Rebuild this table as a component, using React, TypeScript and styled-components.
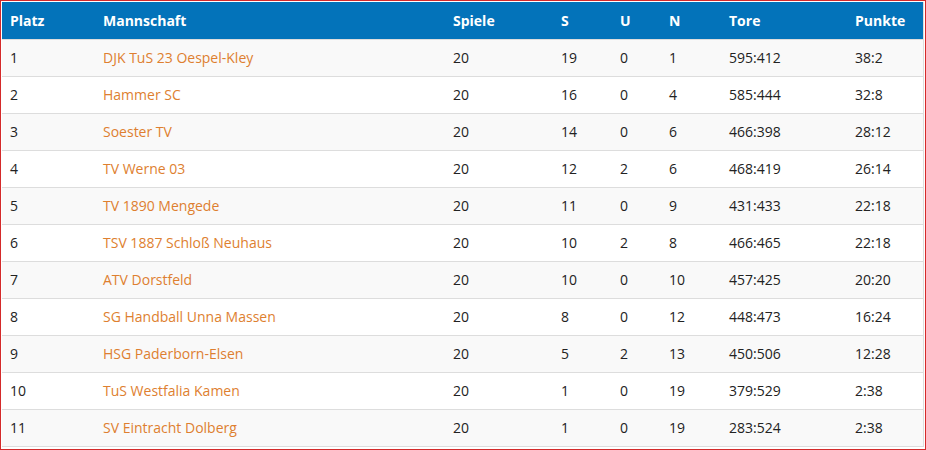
import React from 'react';
import styled, { createGlobalStyle } from 'styled-components';

const GlobalStyle = createGlobalStyle`
  html, body {
    margin: 0;
    padding: 0;
    background: #ffffff;
  }
  * {
    box-sizing: border-box;
  }
`;

const Frame = styled.div`
  width: 926px;
  height: 450px;
  border: 1px solid #d42a2a;
  padding: 1px 1px 0 1px;
  background: #ffffff;
  font-family: 'Open Sans', 'Liberation Sans', sans-serif;
  font-size: 14px;
  color: #222222;
  overflow: hidden;
`;

const Table = styled.table`
  width: 100%;
  border-collapse: collapse;
  border-right: 1px solid #dddddd;
  border-bottom: 1px solid #dddddd;
  table-layout: fixed;
`;

const HeadRow = styled.tr`
  background: #0373ba;
`;

const Th = styled.th<{ $w?: number }>`
  width: ${p => (p.$w ? `${p.$w}px` : 'auto')};
  height: 37px;
  padding: 0 8px;
  text-align: left;
  color: #ffffff;
  font-weight: 700;
  font-size: 14px;
  border-bottom: 1px solid #dddddd;
`;

const Row = styled.tr<{ $odd: boolean }>`
  background: ${p => (p.$odd ? '#f9f9f9' : '#ffffff')};
  border-bottom: 1px solid #dddddd;
  &:last-child {
    border-bottom: none;
  }
`;

const Td = styled.td`
  height: 37px;
  padding: 0 8px;
  white-space: nowrap;
`;

const TeamLink = styled.a`
  color: #de7f30;
  text-decoration: none;
`;

const columns = [
  { label: 'Platz', w: 93 },
  { label: 'Mannschaft', w: 350 },
  { label: 'Spiele', w: 108 },
  { label: 'S', w: 59 },
  { label: 'U', w: 49 },
  { label: 'N', w: 60 },
  { label: 'Tore', w: 126 },
  { label: 'Punkte' },
];

const rows: [string, number, number, number, number, string, string][] = [
  ['DJK TuS 23 Oespel-Kley', 20, 19, 0, 1, '595:412', '38:2'],
  ['Hammer SC', 20, 16, 0, 4, '585:444', '32:8'],
  ['Soester TV', 20, 14, 0, 6, '466:398', '28:12'],
  ['TV Werne 03', 20, 12, 2, 6, '468:419', '26:14'],
  ['TV 1890 Mengede', 20, 11, 0, 9, '431:433', '22:18'],
  ['TSV 1887 Schloß Neuhaus', 20, 10, 2, 8, '466:465', '22:18'],
  ['ATV Dorstfeld', 20, 10, 0, 10, '457:425', '20:20'],
  ['SG Handball Unna Massen', 20, 8, 0, 12, '448:473', '16:24'],
  ['HSG Paderborn-Elsen', 20, 5, 2, 13, '450:506', '12:28'],
  ['TuS Westfalia Kamen', 20, 1, 0, 19, '379:529', '2:38'],
  ['SV Eintracht Dolberg', 20, 1, 0, 19, '283:524', '2:38'],
];

export default function App() {
  return (
    <>
      <GlobalStyle />
      <Frame>
        <Table>
          <thead>
            <HeadRow>
              {columns.map(c => (
                <Th key={c.label} $w={c.w}>
                  {c.label}
                </Th>
              ))}
            </HeadRow>
          </thead>
          <tbody>
            {rows.map((r, i) => (
              <Row key={r[0]} $odd={i % 2 === 0}>
                <Td>{i + 1}</Td>
                <Td>
                  <TeamLink href="#">{r[0]}</TeamLink>
                </Td>
                <Td>{r[1]}</Td>
                <Td>{r[2]}</Td>
                <Td>{r[3]}</Td>
                <Td>{r[4]}</Td>
                <Td>{r[5]}</Td>
                <Td>{r[6]}</Td>
              </Row>
            ))}
          </tbody>
        </Table>
      </Frame>
    </>
  );
}
